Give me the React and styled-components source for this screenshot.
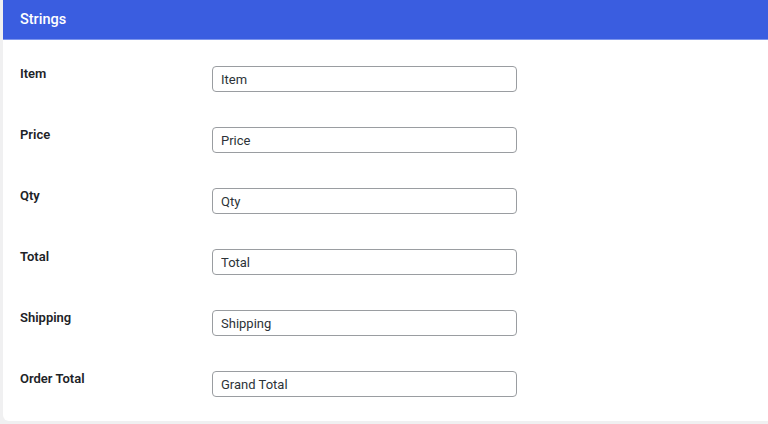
import React from "react";
import styled, { createGlobalStyle } from "styled-components";

const Global = createGlobalStyle`
  html, body { margin: 0; padding: 0; background: #f0f0f1; }
  body { font-family: Roboto, Inter, "Liberation Sans", sans-serif; color: #1d2327; }
`;

const Card = styled.section`
  margin-left: 3px;
  height: 421px;
  background: #ffffff;
  border-bottom-left-radius: 6px;
  overflow: hidden;
`;

const Header = styled.header`
  height: 39px;
  background: #3a5de0;
  border-bottom: 1px solid #7d95ec;
  display: flex;
  align-items: center;
  padding-left: 17px;
  color: #ffffff;
  font-size: 14.5px;
  font-weight: 500;
`;

const Body = styled.div`
  padding-top: 14px;
  display: flex;
  flex-direction: column;
`;

const Row = styled.div`
  height: 61px;
  display: grid;
  grid-template-columns: 192px 305px;
  align-items: start;
  padding: 12px 0 0 17px;
  box-sizing: border-box;
`;

const Label = styled.label`
  font-size: 13px;
  font-weight: 600;
  line-height: 16px;
  color: #1d2327;
`;

const Input = styled.input`
  box-sizing: border-box;
  width: 305px;
  height: 26px;
  border: 1px solid #9a9da1;
  border-radius: 4px;
  padding: 0 8px;
  font-family: inherit;
  font-size: 13px;
  color: #2c3338;
  background: #fff;
  outline: none;
`;

const fields = [
  ["Item", "Item"],
  ["Price", "Price"],
  ["Qty", "Qty"],
  ["Total", "Total"],
  ["Shipping", "Shipping"],
  ["Order Total", "Grand Total"],
];

export default function App() {
  return (
    <>
      <Global />
      <Card>
        <Header>Strings</Header>
        <Body>
          {fields.map(([label, value]) => (
            <Row key={label}>
              <Label>{label}</Label>
              <Input defaultValue={value} />
            </Row>
          ))}
        </Body>
      </Card>
    </>
  );
}
